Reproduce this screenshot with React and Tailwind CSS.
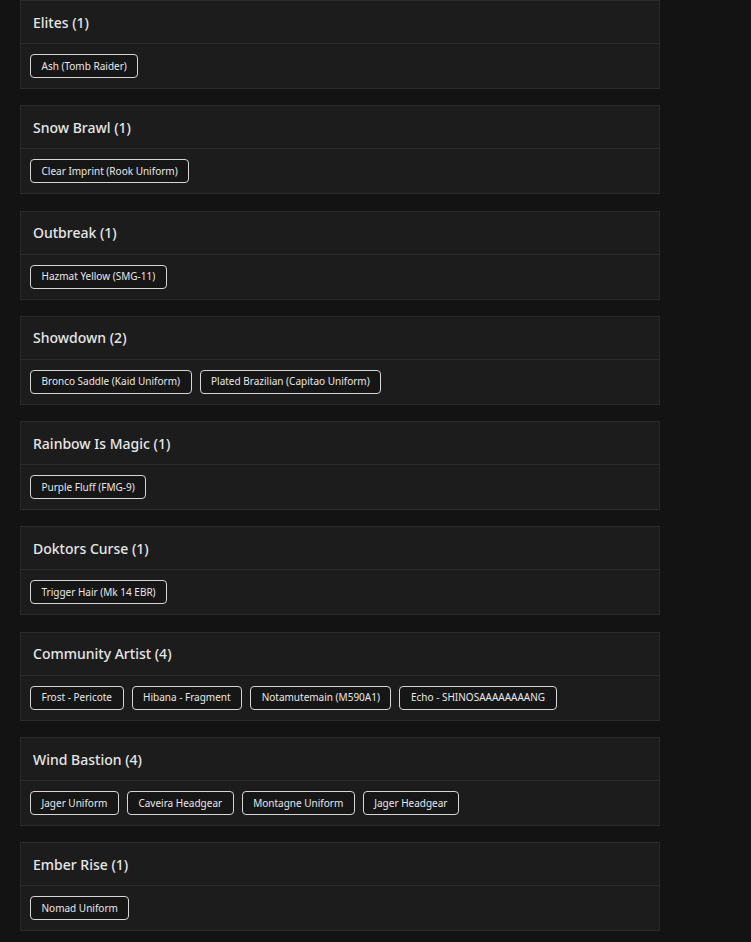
import React from 'react';

const groups = [
  { name: 'Elites', items: ['Ash (Tomb Raider)'] },
  { name: 'Snow Brawl', items: ['Clear Imprint (Rook Uniform)'] },
  { name: 'Outbreak', items: ['Hazmat Yellow (SMG-11)'] },
  { name: 'Showdown', items: ['Bronco Saddle (Kaid Uniform)', 'Plated Brazilian (Capitao Uniform)'] },
  { name: 'Rainbow Is Magic', items: ['Purple Fluff (FMG-9)'] },
  { name: 'Doktors Curse', items: ['Trigger Hair (Mk 14 EBR)'] },
  { name: 'Community Artist', items: ['Frost - Pericote', 'Hibana - Fragment', 'Notamutemain (M590A1)', 'Echo - SHINOSAAAAAAAANG'] },
  { name: 'Wind Bastion', items: ['Jager Uniform', 'Caveira Headgear', 'Montagne Uniform', 'Jager Headgear'] },
  { name: 'Ember Rise', items: ['Nomad Uniform'] },
];

const Group = ({ name, items }) => (
  <div className="w-[640px] border border-[#2b2b2b] bg-[#1c1c1c]">
    <div className="h-[43px] flex items-center px-[12px] border-b border-[#2b2b2b]">
      <h3 className="text-[14px] font-medium text-[#e6e6e6]">
        {name} ({items.length})
      </h3>
    </div>
    <div className="flex flex-wrap gap-[8px] px-[9px] pt-[10px] pb-[10px]">
      {items.map((it) => (
        <span
          key={it}
          className="h-[24px] flex items-center px-[10.5px] rounded-[4px] border border-[#d6d6d6] text-[10px] text-[#e8e8e8] bg-[#161616]"
        >
          {it}
        </span>
      ))}
    </div>
  </div>
);

const App = () => {
  return (
    <div
      className="min-h-screen bg-[#131313] pl-[20px] pb-[20px]"
      style={{ fontFamily: '"Noto Sans", "Open Sans", sans-serif' }}
    >
      <div className="flex flex-col gap-[16.3px]">
        {groups.map((g) => (
          <Group key={g.name} {...g} />
        ))}
      </div>
    </div>
  );
};

export default App;
